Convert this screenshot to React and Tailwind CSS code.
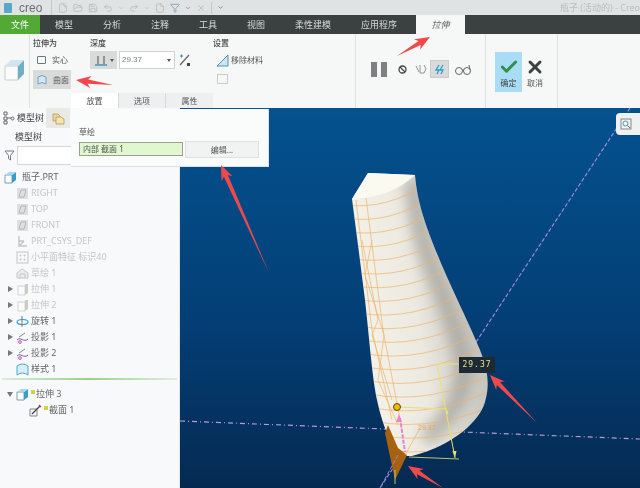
import React from "react";
import { File, FolderOpen, Save, Undo2, Redo2, Check, X, Filter, ChevronDown } from "lucide-react";

const tabs = ["模型", "分析", "注释", "工具", "视图", "柔性建模", "应用程序"];

// little tree icon, tinted per feature type
const TreeIcon = ({ kind, faded }) => {
  const op = faded ? 0.4 : 1;
  return (
    <svg width="13" height="13" viewBox="0 0 13 13" style={{ opacity: op }} className="shrink-0">
      {kind === "plane" && (
        <g>
          <rect x="1" y="1" width="11" height="11" fill="#b8bcbc" />
          <path d="M3 10 L5 3 L10 3 L8 10 Z" fill="none" stroke="#555" strokeWidth="1" />
        </g>
      )}
      {kind === "csys" && <path d="M3 1 V11 H11 M3 6 H8 M3 11 L8 6" fill="none" stroke="#777" strokeWidth="1.4" />}
      {kind === "facet" && (
        <g fill="none" stroke="#777" strokeWidth="1">
          <rect x="1" y="1" width="11" height="11" />
          <path d="M4 4h1v1H4zM8 4h1v1H8zM4 8h1v1H4zM8 8h1v1H8z" />
        </g>
      )}
      {kind === "sketch" && <path d="M1 11 L1 6 L6 2 L12 6 V11 Z M4 11 V7 H9 V11" fill="#ddd" stroke="#777" strokeWidth="1" />}
      {kind === "extrude" && (
        <g>
          <path d="M2 3 H9 V12 H2 Z" fill="#fff" stroke="#999" />
          <path d="M9 1 H12 V10 L9 12 Z" fill="#8d8a70" />
        </g>
      )}
      {kind === "revolve" && (
        <g fill="none">
          <ellipse cx="6.5" cy="7" rx="5.5" ry="2.5" stroke="#2f9fd0" strokeWidth="1.2" />
          <path d="M6 1 V12" stroke="#777" strokeWidth="1" />
        </g>
      )}
      {kind === "project" && (
        <g fill="none" strokeWidth="1">
          <path d="M1 9 C4 5 8 12 12 8" stroke="#8a55b5" />
          <path d="M3 6 L9 2" stroke="#888" />
          <circle cx="4" cy="11" r="1.4" stroke="#c0559b" />
        </g>
      )}
      {kind === "style" && <path d="M1 12 V3 Q6.5 -1 12 3 V12 Q6.5 8 1 12 Z" fill="#d5eef9" stroke="#5aa3c4" strokeWidth="1" />}
      {kind === "active" && (
        <g>
          <path d="M1 4 H8 V12 H1 Z" fill="#fff" stroke="#7d9fb0" />
          <path d="M8 4 L12 1 V9 L8 12 Z" fill="#3a9dc8" />
          <path d="M1 4 L5 1 H12 L8 4 Z" fill="#a9d9ee" />
        </g>
      )}
      {kind === "section" && (
        <g fill="none">
          <path d="M1 5 H8 V12 H1 Z" stroke="#888" fill="#f4f4f4" />
          <path d="M3 10 L11 2" stroke="#444" strokeWidth="1.3" />
          <path d="M10 1 L12 3" stroke="#c33" strokeWidth="1.3" />
        </g>
      )}
    </svg>
  );
};

const rows = [
  { label: "RIGHT", kind: "plane", faded: true },
  { label: "TOP", kind: "plane", faded: true },
  { label: "FRONT", kind: "plane", faded: true },
  { label: "PRT_CSYS_DEF", kind: "csys", faded: true },
  { label: "小平面特征 标识40", kind: "facet", faded: true },
  { label: "草绘 1", kind: "sketch", faded: true },
  { label: "拉伸 1", kind: "extrude", faded: true, caret: true },
  { label: "拉伸 2", kind: "extrude", faded: true, caret: true },
  { label: "旋转 1", kind: "revolve", caret: true },
  { label: "投影 1", kind: "project", caret: true },
  { label: "投影 2", kind: "project", caret: true },
  { label: "样式 1", kind: "style" },
];

const TreeRow = ({ label, kind, faded, caret }) => (
  <div className="flex h-4 items-center">
    <span className="flex w-4 shrink-0 items-center justify-center pl-1">
      {caret && <span className="h-0 w-0 border-y-[3px] border-l-[5px] border-y-transparent border-l-[#777]" />}
    </span>
    <TreeIcon kind={kind} faded={faded} />
    <span className={`ml-[2px] whitespace-nowrap text-[9px] ${faded ? "text-[#c3c7c8]" : "text-[#666]"}`}>{label}</span>
  </div>
);

const Arrow = ({ from, to }) => {
  const [x1, y1] = from;
  const [x2, y2] = to;
  const len = Math.hypot(x2 - x1, y2 - y1);
  const ux = (x2 - x1) / len;
  const uy = (y2 - y1) / len;
  const p = (along, side) => `${x2 - ux * along - uy * side},${y2 - uy * along + ux * side}`;
  const pts = [p(0, 0), p(15, 6), p(12, 2.2), p(len, 0), p(12, -2.2), p(15, -6)].join(" ");
  return <polygon points={pts} fill="#ee4a4c" />;
};

const bottlePath =
  "M352 199 L368 173 L415 175 C417 200 424 222 438 256 C452 290 470 325 480 350 C488 370 490 385 485 402 C480 420 455 445 412 456 L404 456 C392 445 384 432 377 400 C372 375 370 345 365 300 C360 260 356 230 352 199 Z";

const latitudes = Array.from({ length: 19 }, (_, i) => 205 + i * 13.5);

const Viewport = () => (
  <svg viewBox="180 108 460 380" className="block h-full w-full">
    <defs>
      <linearGradient id="sky" x1="0" y1="0" x2="0" y2="1">
        <stop offset="0" stopColor="#04528f" />
        <stop offset="0.55" stopColor="#033f76" />
        <stop offset="1" stopColor="#052a52" />
      </linearGradient>
      <linearGradient id="body" gradientUnits="userSpaceOnUse" x1="350" y1="300" x2="490" y2="280">
        <stop offset="0" stopColor="#f5f3ea" />
        <stop offset="0.45" stopColor="#ebe9e0" />
        <stop offset="0.75" stopColor="#cfcec7" />
        <stop offset="0.92" stopColor="#c2c1bb" />
        <stop offset="1" stopColor="#d6d4cc" />
      </linearGradient>
      <clipPath id="bottle">
        <path d={bottlePath} />
      </clipPath>
      <filter id="soft" x="-40%" y="-30%" width="180%" height="160%">
        <feGaussianBlur stdDeviation="7" />
      </filter>
    </defs>
    <rect x="180" y="108" width="460" height="380" fill="url(#sky)" />
    <path d="M630 108 L380 488" stroke="#9b86dc" strokeWidth="1.2" strokeDasharray="4 2" fill="none" />
    <path d="M180 421 L640 439" stroke="#b79ad8" strokeWidth="1.2" strokeDasharray="5 3 1 3" fill="none" />
    <path d={bottlePath} fill="url(#body)" />
    <g clipPath="url(#bottle)">
      <path
        d="M413 180 C415 205 420 235 430 262 C442 295 455 325 462 355 C468 385 455 415 425 440"
        fill="none"
        stroke="#8f8e88"
        strokeOpacity="0.6"
        strokeWidth="16"
        filter="url(#soft)"
      />
    </g>
    <path d="M352 199 L368 173 L415 175 Q392 197 352 199 Z" fill="#fbfaf1" />
    <g clipPath="url(#bottle)" fill="none" stroke="#f1b469" strokeOpacity="0.7" strokeWidth="1">
      {latitudes.map((y, i) => {
        const xl = 346 + (y - 205) * 0.12;
        const xr = 428 + (y - 205) * 0.36;
        return <path key={y} d={`M${xl} ${y} Q${(xl + xr) / 2} ${y + 5 + i * 0.5} ${xr} ${y - 22}`} />;
      })}
      <path d="M356 200 L372 330 L392 420" />
      <path d="M366 198 L383 330 L402 430" />
      <path d="M362 240 L378 320 L372 335 L392 400" />
      <path d="M372 240 L365 275 L384 335 L378 380 L398 425" />
    </g>
    <path d="M388 425 L385 433 L395 480 L407 455 L398 448 Z" fill="#a8620f" />
    <path d="M398 455 L380 488" stroke="#9b86dc" strokeWidth="1" strokeDasharray="4 2" />
    <path d="M437 364 H459 M437 364 L455 458 M397 407 L447 409" stroke="#e9e36b" strokeWidth="1" fill="none" />
    <path d="M409 457 L459 459" stroke="#b8c56c" strokeWidth="1.2" />
    <path d="M395 470 V484" stroke="#b8c56c" strokeWidth="1" />
    <path d="M447 409 l-1.5 5 h3 Z M455 458 l-2.5 -7 h4 Z" fill="#e9e36b" />
    <path d="M400 418 L405 452" stroke="#ee82c8" strokeWidth="2" strokeDasharray="4 1.5" />
    <path d="M399 414 l-3 8 h6 Z" fill="#ee82c8" />
    <path d="M405 455 L420 428" stroke="#f1b469" strokeWidth="0.8" fill="none" />
    <text x="418" y="430" fontSize="7" fill="#f1a45a" fontFamily="Liberation Sans">29.37</text>
    <circle cx="397" cy="407" r="3.5" fill="#f4b800" stroke="#5a4a10" strokeWidth="1" />
  </svg>
);

export default function App() {
  return (
    <div className="relative flex h-[488px] w-[640px] flex-col overflow-hidden bg-white font-['Noto_Sans','Noto_Sans_CJK_SC',sans-serif] blur-[0.5px]">
      {/* title bar */}
      <div className="flex h-[15px] shrink-0 items-center bg-[#dfe3e3] pl-[4px] pr-0">
        <span className="h-[10px] w-[8px] rounded-[1px] bg-[#5aa7c7]" />
        <span className="ml-[7px] font-['Liberation_Sans',sans-serif] text-[12px] leading-none text-[#6a6f70]">creo</span>
        <span className="ml-[9px] h-[15px] w-px bg-[#c5c9c9]" />
        <div className="ml-[6px] flex items-center gap-[5px] text-[#b7bbbc]">
          <File size={10} />
          <FolderOpen size={10} />
          <Save size={10} />
          <Undo2 size={10} />
          <ChevronDown size={6} />
          <Redo2 size={10} />
          <ChevronDown size={6} />
          <File size={10} />
          <Filter size={10} className="text-[#7d9fb0]" />
          <ChevronDown size={6} className="text-[#555]" />
          <X size={10} />
          <span className="h-3 w-px bg-[#c5c9c9]" />
          <ChevronDown size={7} className="text-[#555]" />
        </div>
        <span className="ml-auto whitespace-nowrap text-[9px] text-[#b9bdbd]">瓶子 (活动的) - Creo</span>
      </div>

      {/* tab row */}
      <div className="flex h-[19px] shrink-0 items-stretch bg-[#3b4040] text-[9px] leading-none text-[#d6d9d9]">
        <div className="flex w-10 items-center justify-center bg-[#52a936] text-white">文件</div>
        {tabs.map((t) => (
          <div key={t} className="flex items-center whitespace-nowrap px-[15px]">{t}</div>
        ))}
        <div className="ml-1 flex w-[49px] items-center justify-center bg-[#f6f7f7] italic text-[#666]">拉伸</div>
      </div>

      {/* ribbon */}
      <div className="flex h-[74px] shrink-0 bg-[#f6f7f7] text-[8px] text-[#555]">
        <div className="flex w-[30px] shrink-0 items-center justify-center border-r border-[#dfe1e1] pb-[3px]">
          <svg width="21" height="22" viewBox="0 0 21 22">
            <path d="M1 7 H14 V21 H1 Z" fill="#fbfbfb" stroke="#c9cccc" />
            <path d="M14 7 L20 1 V15 L14 21 Z" fill="#6faec9" />
            <path d="M1 7 L7 1 H20 L14 7 Z" fill="#cfe6f0" />
          </svg>
        </div>
        <div className="flex w-[326px] shrink-0 flex-col border-r border-[#dfe1e1]">
          <div className="flex h-[59px]">
            <div className="w-[60px] shrink-0 pl-[3px] pt-[4px]">
              <div className="font-medium leading-[9px] text-[#444]">拉伸为</div>
              <div className="mt-[5px] flex h-4 items-center gap-[6px] pl-[4px]">
                <span className="h-2 w-[9px] rounded-[1px] border border-[#69767a]" />
                <span>实心</span>
              </div>
              <div className="mt-[2px] flex h-[19px] w-[38px] items-center gap-[6px] bg-[#d9dbdb] pl-[4px]">
                <svg width="10" height="10" viewBox="0 0 10 10">
                  <path d="M1 9 V2 Q5 -1 9 2 V9 Q5 6 1 9 Z" fill="#cfe8f4" stroke="#6fa6bf" />
                </svg>
                <span>曲面</span>
              </div>
            </div>
            <div className="w-[123px] shrink-0 pt-[4px]">
              <div className="font-medium leading-[9px] text-[#444]">深度</div>
              <div className="mt-[4px] flex h-[18px] items-center">
                <div className="flex h-[18px] w-[27px] items-center gap-[2px] bg-[#d9dbdb] pl-[4px]">
                  <svg width="14" height="11" viewBox="0 0 14 11">
                    <path d="M1 10 H13" stroke="#3a8fb0" strokeWidth="1.4" />
                    <path d="M4 1 V9 M10 1 V9" stroke="#666" strokeWidth="1.2" />
                  </svg>
                  <span className="h-0 w-0 border-x-[2px] border-t-[3px] border-x-transparent border-t-[#555]" />
                </div>
                <div className="ml-[2px] flex h-[18px] w-[56px] items-center justify-between border border-[#d0d3d3] bg-white pl-[2px] pr-[3px] font-['Liberation_Sans',sans-serif] text-[8px] text-[#7a7f80]">
                  29.37
                  <span className="h-0 w-0 border-x-[2px] border-t-[3px] border-x-transparent border-t-[#555]" />
                </div>
                <svg width="12" height="13" viewBox="0 0 12 13" className="ml-[4px]">
                  <path d="M1 11 L10 1" stroke="#666" strokeWidth="1.2" />
                  <path d="M1 2 H4 M2.5 0.5 V3.5" stroke="#3a8fb0" strokeWidth="1.1" />
                  <rect x="8" y="9" width="3" height="3" fill="#444" />
                </svg>
              </div>
            </div>
            <div className="min-w-0 flex-1 pt-[4px]">
              <div className="font-medium leading-[9px] text-[#444]">设置</div>
              <div className="mt-[5px] flex h-4 items-center gap-[2px] pl-[3px]">
                <svg width="13" height="13" viewBox="0 0 13 13">
                  <path d="M1 12 L12 1 V12 Z" fill="#cfe6f0" stroke="#4d97b8" />
                </svg>
                <span className="whitespace-nowrap">移除材料</span>
              </div>
              <div className="ml-[4px] mt-[6px] h-[10px] w-[11px] border border-[#c9cccc] bg-[#f6f7f7]" />
            </div>
          </div>
          <div className="ml-[41px] flex h-[15px] text-[8px] leading-none">
            <div className="flex w-[47px] items-center justify-center bg-white">放置</div>
            <div className="flex w-[47px] items-center justify-center border-l border-[#d9dbdb] bg-[#eeeff0]">选项</div>
            <div className="flex w-[48px] items-center justify-center border-l border-[#d9dbdb] bg-[#eeeff0]">属性</div>
          </div>
        </div>
        <div className="flex w-[130px] shrink-0 items-center border-r border-[#dfe1e1] pl-[15px] pb-[4px]">
          <div className="flex w-[16px] justify-between">
            <span className="h-[15px] w-[6px] bg-[#7d8182]" />
            <span className="h-[15px] w-[6px] bg-[#7d8182]" />
          </div>
          <svg width="9" height="9" viewBox="0 0 9 9" className="ml-[11px]">
            <circle cx="4.5" cy="4.5" r="3.5" fill="none" stroke="#444" strokeWidth="1.3" />
            <path d="M2 2 L7 7" stroke="#444" strokeWidth="1.2" />
          </svg>
          <svg width="12" height="12" viewBox="0 0 12 12" className="ml-[8px]">
            <path d="M1 3 L4 9 M5 2 V10 H9 M9 2 L11 6 L9 10" fill="none" stroke="#888" strokeWidth="0.9" />
          </svg>
          <div className="ml-[3px] flex h-[18px] w-[19px] items-center justify-center border border-[#c9cccc] bg-[#d9dbdb]">
            <svg width="11" height="11" viewBox="0 0 11 11">
              <path d="M5 1 L2 6 H5 L3 10 M9 1 L6 6 H9 L7 10" fill="none" stroke="#2a9fd0" strokeWidth="1.3" />
            </svg>
          </div>
          <svg width="18" height="11" viewBox="0 0 18 11" className="ml-[5px]">
            <circle cx="5" cy="7" r="3.5" fill="none" stroke="#666" />
            <circle cx="13" cy="7" r="3.5" fill="none" stroke="#666" />
            <path d="M8.5 6 Q9 5 9.5 6 M16 6 L15 1" fill="none" stroke="#666" />
          </svg>
        </div>
        <div className="flex w-[72px] shrink-0 items-start border-r border-[#dfe1e1] pl-[9px] pt-[18px]">
          <div className="flex h-[40px] w-[27px] flex-col items-center bg-[#a9dcf5] pt-[5px] text-[#444]">
            <Check size={20} strokeWidth={3.5} className="text-[#2f8f4e]" />
            <span className="mt-[2px] leading-none">确定</span>
          </div>
          <div className="ml-[2px] flex w-[22px] flex-col items-center pt-[5px]">
            <X size={20} strokeWidth={3.5} className="text-[#3b4040]" />
            <span className="mt-[2px] leading-none">取消</span>
          </div>
        </div>
      </div>

      {/* body */}
      <div className="flex min-h-0 flex-1">
        <div className="w-[180px] shrink-0 border-r border-[#dfe3e5] bg-[#f7f9fa] text-[9px] text-[#666]">
          <div className="flex h-5 items-center">
            <svg width="12" height="14" viewBox="0 0 12 14" className="ml-[3px]">
              <path d="M1 1h3v3H1zM1 6h3v3H1zM1 10h3v3H1zM4 7h4" fill="none" stroke="#666" />
              <circle cx="9.5" cy="7.5" r="1.5" fill="none" stroke="#666" />
            </svg>
            <span className="ml-[2px] w-[29px] text-[#444]">模型树</span>
            <div className="flex h-5 w-[24px] items-center justify-center bg-[#e9e9e5]">
              <svg width="13" height="13" viewBox="0 0 13 13">
                <path d="M1 2 H6 L8 4 V9 H1 Z" fill="#eed9a0" stroke="#b59a55" strokeWidth="0.8" />
                <path d="M4 5 H9 L12 7 V12 H4 Z" fill="#f4e4b5" stroke="#b59a55" strokeWidth="0.8" />
              </svg>
            </div>
          </div>
          <div className="pl-[15px] pt-[3px] leading-[11px] text-[#444]">模型树</div>
          <div className="mt-[4px] flex h-[19px] items-center pl-[4px]">
            <svg width="11" height="11" viewBox="0 0 11 11">
              <path d="M1 1 H10 L6.5 5.5 V10 L4.5 8.5 V5.5 Z" fill="none" stroke="#778" strokeWidth="1" />
            </svg>
            <div className="ml-[2px] h-[19px] w-[60px] border border-[#d4d7d8] bg-white" />
          </div>
          <div className="mt-[4px] flex h-4 items-center pl-[4px]">
            <TreeIcon kind="active" />
            <span className="ml-[5px] text-[9px]">瓶子.PRT</span>
          </div>
          {rows.map((r) => (
            <TreeRow key={r.label} {...r} />
          ))}
          <div className="mx-[2px] mt-[1px] h-[2px] bg-gradient-to-r from-[#dfe8df] via-[#96d28a] to-[#e4ece4]" />
          <div className="mt-[6px] flex h-4 items-center">
            <span className="flex w-4 shrink-0 justify-center pl-1">
              <span className="h-0 w-0 border-x-[3px] border-t-[5px] border-x-transparent border-t-[#777]" />
            </span>
            <TreeIcon kind="active" />
            <span className="ml-[2px] mb-[5px] h-1 w-1 bg-[#cfd24a]" />
            <span className="ml-px">拉伸 3</span>
          </div>
          <div className="flex h-4 items-center pl-[29px]">
            <TreeIcon kind="section" />
            <span className="ml-[2px] mb-[5px] h-1 w-1 bg-[#cfd24a]" />
            <span className="ml-px">截面 1</span>
          </div>
        </div>
        <div className="relative min-w-0 flex-1">
          <Viewport />
          <div className="absolute right-0 top-[5px] flex h-[22px] w-6 items-center rounded-l-sm bg-[#f0f2f2] pl-[4px]">
            <svg width="12" height="12" viewBox="0 0 12 12">
              <rect x="1" y="1" width="10" height="10" fill="none" stroke="#888" />
              <circle cx="5.5" cy="5.5" r="2.5" fill="none" stroke="#4d97b8" />
              <path d="M7.5 7.5 L10 10" stroke="#666" />
            </svg>
          </div>
          {/* 29.37 dimension tag */}
          <div className="absolute left-[279px] top-[249px] flex h-4 w-9 items-center justify-center bg-[#1d2a33] font-['DejaVu_Sans_Mono',monospace] text-[8px] tracking-[1px] text-[#e8e58a]">
            29.37
          </div>
        </div>
      </div>

      {/* placement popup */}
      <div className="absolute left-[71px] top-[109px] h-[58px] w-[198px] border-b border-r border-[#dde0e1] bg-[#fafbfb] px-[8px] pt-[18px] text-[8px] text-[#555]">
        <div className="leading-[10px]">草绘</div>
        <div className="mt-[4px] flex gap-[2px]">
          <div className="mt-[1px] flex h-[14px] w-[104px] items-center border border-[#9a9f90] bg-[#e0f7cf] pl-[3px]">内部 截面 1</div>
          <div className="flex h-[17px] w-[74px] items-center justify-center border border-[#dfe1e1] bg-[#f1f2f2]">编辑...</div>
        </div>
      </div>

      {/* annotation arrows */}
      <svg viewBox="0 0 640 488" className="pointer-events-none absolute inset-0 h-full w-full">
        <Arrow from={[397, 56]} to={[430, 37]} />
        <Arrow from={[113, 85]} to={[76, 80]} />
        <Arrow from={[269, 273]} to={[221, 165]} />
        <Arrow from={[537, 423]} to={[490, 375]} />
        <Arrow from={[443, 488]} to={[408, 466]} />
      </svg>
    </div>
  );
}
